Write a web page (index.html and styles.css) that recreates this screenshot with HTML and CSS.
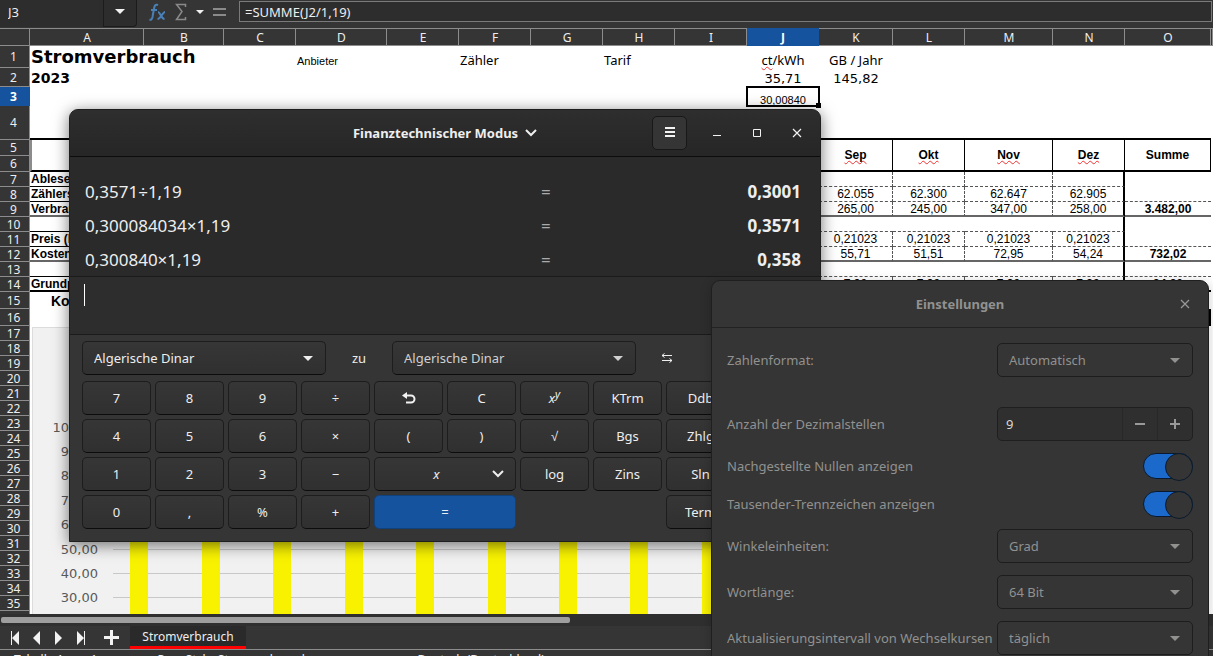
FILE: index.html
```html
<!DOCTYPE html>
<html lang="de">
<head>
  <meta charset="UTF-8" />
  <meta name="viewport" content="width=device-width, initial-scale=1.0"/>
  <title>Stromverbrauch</title>
  <link rel="stylesheet" href="styles.css">
</head>
<body>
  <div class="office">
    <!-- Formelleiste -->
    <div class="formula-bar">
      <input class="name-box" type="text" value="J3" aria-label="Namenfeld">
      <button class="name-drop" aria-label="Bereich"><span class="tri"></span></button>
      <div class="fx-tools">
        <button class="fx" aria-label="Funktionsassistent"><svg width="17" height="20" viewBox="0 0 17 20" fill="none" stroke="#4a80b8" stroke-width="2"><path d="M9 3C6.500 2 5.500 3.500 5 6.500L3.500 15C3 17.500 2 18 .5 17.500M2 8h6"/><path d="M9 10c2.500 0 3 7 6.500 7M16 10c-2.500 0-4 7-7.500 7"/></svg></button>
        <button class="sum" aria-label="Summe"><svg width="12" height="18" viewBox="0 0 12 18" fill="none" stroke="#8a8a8a" stroke-width="1.500"><path d="M10.500 4V1.500H1.500L7 8.500 1.500 16.500H10.500V14"/></svg></button>
        <button class="sum-drop" aria-label="Funktion wählen"><span class="tri small"></span></button>
        <button class="equal" aria-label="Formel"><svg width="13" height="10" viewBox="0 0 13 10" fill="#8a8a8a"><path d="M0 1h13v2H0zM0 7h13v2H0z"/></svg></button>
      </div>
      <input class="formula" type="text" value="=SUMME(J2/1,19)" aria-label="Eingabezeile">
    </div>

    <div class="sheet">
      <table class="grid">
        <colgroup>
          <col class="c-head"><col class="c-a"><col class="c-b"><col><col class="c-d"><col><col><col><col><col><col><col class="c-k"><col><col class="c-m"><col><col class="c-o"><col class="c-rest">
        </colgroup>
        <thead>
          <tr><th></th><th>A</th><th>B</th><th>C</th><th>D</th><th>E</th><th>F</th><th>G</th><th>H</th><th>I</th><th class="active">J</th><th>K</th><th>L</th><th>M</th><th>N</th><th>O</th><th></th></tr>
        </thead>
        <tbody>
          <tr class="r1"><th>1</th><td class="title" colspan="3">Stromverbrauch</td><td class="provider">Anbieter</td><td></td><td class="info">Zähler</td><td></td><td class="info">Tarif</td><td></td><td class="info mid"><span class="typo">ct</span>/kWh</td><td class="info mid">GB / Jahr</td><td colspan="5"></td></tr>
          <tr class="r2"><th>2</th><td class="year" colspan="9">2023</td><td class="rate">35,71</td><td class="rate">145,82</td><td colspan="5"></td></tr>
          <tr class="r3"><th class="active">3</th><td colspan="9"></td><td class="selected">30,00840<i class="handle"></i></td><td colspan="6"></td></tr>
          <tr class="r4"><th>4</th><td class="thick" colspan="15"></td><td></td></tr>
          <tr class="r5"><th>5</th><td class="edge thick" rowspan="2"></td><td class="thick" colspan="9" rowspan="2"></td><td class="month" rowspan="2"><span class="typo">Sep</span></td><td class="month" rowspan="2"><span class="typo">Okt</span></td><td class="month" rowspan="2"><span class="typo">Nov</span></td><td class="month" rowspan="2"><span class="typo">Dez</span></td><td class="month" rowspan="2">Summe</td><td rowspan="2"></td></tr>
          <tr class="r5"><th>6</th></tr>
          <tr><th>7</th><td class="label">Ablesedatum</td><td colspan="9"></td><td class="dash"></td><td class="dash"></td><td class="dash"></td><td class="dash last"></td><td></td><td></td></tr>
          <tr><th>8</th><td class="label">Zählerstand</td><td colspan="9"></td><td class="dash">62.055</td><td class="dash">62.300</td><td class="dash">62.647</td><td class="dash last">62.905</td><td class="under"></td><td></td></tr>
          <tr><th>9</th><td class="label double">Verbrauch</td><td colspan="9"></td><td class="dash double">265,00</td><td class="dash double">245,00</td><td class="dash double">347,00</td><td class="dash last double">258,00</td><td class="sum-cell double">3.482,00</td><td></td></tr>
          <tr><th>10</th><td class="label"></td><td colspan="9"></td><td class="under"></td><td class="under"></td><td class="under"></td><td class="under last"></td><td></td><td></td></tr>
          <tr><th>11</th><td class="label">Preis (kWh)</td><td colspan="9"></td><td class="dash">0,21023</td><td class="dash">0,21023</td><td class="dash">0,21023</td><td class="dash last">0,21023</td><td class="under"></td><td></td></tr>
          <tr><th>12</th><td class="label double">Kosten</td><td colspan="9"></td><td class="dash double">55,71</td><td class="dash double">51,51</td><td class="dash double">72,95</td><td class="dash last double">54,24</td><td class="sum-cell double">732,02</td><td></td></tr>
          <tr><th>13</th><td class="label"></td><td colspan="9"></td><td class="under"></td><td class="under"></td><td class="under"></td><td class="under last"></td><td class="under"></td><td></td></tr>
          <tr><th>14</th><td class="label thick">Grundpreis</td><td colspan="9"></td><td class="dash bold">7,90</td><td class="dash bold">7,90</td><td class="dash bold">7,90</td><td class="dash last bold">7,90</td><td class="sum-cell thick">94,80</td><td></td></tr>
          <tr class="r15"><th>15</th><td class="costs" colspan="16">Kosten</td></tr>
          <tr class="r15"><th>16</th><td colspan="14"></td><td class="boxed"></td><td></td></tr>
          <tr><th>17</th><td colspan="16"></td></tr>
          <tr><th>18</th><td colspan="16"></td></tr>
          <tr><th>19</th><td colspan="16"></td></tr>
          <tr><th>20</th><td colspan="16"></td></tr>
          <tr><th>21</th><td colspan="16"></td></tr>
          <tr><th>22</th><td colspan="16"></td></tr>
          <tr><th>23</th><td colspan="16"></td></tr>
          <tr><th>24</th><td colspan="16"></td></tr>
          <tr><th>25</th><td colspan="16"></td></tr>
          <tr><th>26</th><td colspan="16"></td></tr>
          <tr><th>27</th><td colspan="16"></td></tr>
          <tr><th>28</th><td colspan="16"></td></tr>
          <tr><th>29</th><td colspan="16"></td></tr>
          <tr><th>30</th><td colspan="16"></td></tr>
          <tr><th>31</th><td colspan="16"></td></tr>
          <tr><th>32</th><td colspan="16"></td></tr>
          <tr><th>33</th><td colspan="16"></td></tr>
          <tr><th>34</th><td colspan="16"></td></tr>
          <tr><th>35</th><td colspan="16"></td></tr>
          <tr><th></th><td colspan="16"></td></tr>
        </tbody>
      </table>

      <!-- Diagramm liegt über den Zellen -->
      <svg class="chart" width="900" height="300">
        <rect x="0" y="0" width="900" height="300" fill="#f1f1f1" stroke="#dcdcdc" stroke-width="2"/>
        <g fill="#c8c8c8">
          <rect x="81" y="222" width="800" height="1"/>
          <rect x="81" y="246" width="800" height="1"/>
          <rect x="81" y="270" width="800" height="1"/>
        </g>
        <g fill="#f8f200">
          <rect x="98" y="60" width="18" height="240"/>
          <rect x="170" y="60" width="18" height="240"/>
          <rect x="241" y="60" width="18" height="240"/>
          <rect x="313" y="60" width="18" height="240"/>
          <rect x="384" y="60" width="18" height="240"/>
          <rect x="456" y="60" width="18" height="240"/>
          <rect x="527" y="60" width="18" height="240"/>
          <rect x="598" y="60" width="18" height="240"/>
          <rect x="670" y="60" width="18" height="240"/>
        </g>
        <g class="axis" text-anchor="end">
          <text x="66" y="105">100,00</text>
          <text x="66" y="129">90,00</text>
          <text x="66" y="153">80,00</text>
          <text x="66" y="178">70,00</text>
          <text x="66" y="202">60,00</text>
          <text x="66" y="227">50,00</text>
          <text x="66" y="251">40,00</text>
          <text x="66" y="275">30,00</text>
        </g>
      </svg>
    </div>

    <div class="scroll"><div class="thumb"></div></div>
    <div class="tabs">
      <button aria-label="Erste Tabelle"><svg width="10" height="14" viewBox="0 0 10 14" fill="#f2f2f2"><path d="M1 0h1v14H1zM9 0v14L2 7z"/></svg></button>
      <button aria-label="Vorherige Tabelle"><svg width="10" height="14" viewBox="0 0 10 14" fill="#f2f2f2"><path d="M8 0v14L1 7z"/></svg></button>
      <button aria-label="Nächste Tabelle"><svg width="10" height="14" viewBox="0 0 10 14" fill="#f2f2f2"><path d="M1 0v14l7-7z"/></svg></button>
      <button aria-label="Letzte Tabelle"><svg width="10" height="14" viewBox="0 0 10 14" fill="#f2f2f2"><path d="M8 0h1v14H8zM1 0v14l7-7z"/></svg></button>
      <button class="add" aria-label="Tabelle hinzufügen"><svg width="15" height="15" viewBox="0 0 15 15" fill="#f2f2f2"><path d="M6 0h3v6h6v3H9v6H6V9H0V6h6z"/></svg></button>
      <button class="tab">Stromverbrauch</button>
    </div>
    <div class="status"><span>Tabelle 1 von 1</span><span class="style">PageStyle_Stromverbrauch</span><span>Deutsch (Deutschland)</span></div>
  </div>

  <!-- Taschenrechner -->
  <section class="window calc">
    <header class="calc-head">
      <button class="mode">Finanztechnischer Modus <svg width="12" height="8" viewBox="0 0 12 8" fill="none" stroke="#eee" stroke-width="2"><path d="M1 1l5 5 5-5"/></svg></button>
      <div class="buttons">
        <button class="menu" aria-label="Menü"><svg width="10" height="12" viewBox="0 0 10 12" fill="#f2f2f2"><path d="M0 0h10v2H0zM0 4h10v2H0zM0 8h10v2H0z"/></svg></button>
        <button class="wm" aria-label="Minimieren"><svg width="10" height="10" viewBox="0 0 10 10" fill="#f2f2f2"><path d="M1 7h8v1H1z"/></svg></button>
        <button class="wm" aria-label="Maximieren"><svg width="10" height="10" viewBox="0 0 10 10" fill="none" stroke="#f2f2f2"><path d="M1.500 1.500h7v7h-7z"/></svg></button>
        <button class="wm" aria-label="Schließen"><svg width="10" height="10" viewBox="0 0 10 10" fill="none" stroke="#f2f2f2" stroke-width="1.200"><path d="M1 1l8 8M9 1L1 9"/></svg></button>
      </div>
    </header>
    <div class="history">
      <div class="calc-row"><span>0,3571÷1,19</span><span class="eq">=</span><b>0,3001</b></div>
      <div class="calc-row"><span>0,300084034×1,19</span><span class="eq">=</span><b>0,3571</b></div>
      <div class="calc-row"><span>0,300840×1,19</span><span class="eq">=</span><b>0,358</b></div>
    </div>
    <div class="entry"><span class="caret"></span><input type="text" aria-label="Rechnung"></div>
    <div class="pad">
      <div class="convert">
        <span class="combo"><select aria-label="Von Währung"><option>Algerische Dinar</option></select></span>
        <span class="to">zu</span>
        <span class="combo dim"><select aria-label="In Währung"><option>Algerische Dinar</option></select></span>
        <button class="swap" aria-label="Tauschen"><svg width="12" height="10" viewBox="0 0 12 10" fill="none" stroke="#eee"><path d="M11 2.500H1M3.500 .5l-2.500 2 2.500 2M1 7.500h10M8.500 5.500l2.500 2-2.500 2"/></svg></button>
      </div>
      <div class="keys">
        <button>7</button><button>8</button><button>9</button><button>÷</button>
        <button aria-label="Rückgängig"><svg width="14" height="12" viewBox="0 0 14 12"><path d="M3 3.500h6a3.500 3.500 0 0 1 0 7H4" fill="none" stroke="#f2f2f2" stroke-width="2"/><path d="M0 3.500L5 0v7z" fill="#f2f2f2"/></svg></button>
        <button>C</button><button><i>x<sup>y</sup></i></button><button>KTrm</button><button>Ddb</button>
        <button class="first">4</button><button>5</button><button>6</button><button>×</button><button>(</button><button>)</button><button>√</button><button>Bgs</button><button>Zhlg</button>
        <button class="first">1</button><button>2</button><button>3</button><button>−</button>
        <button class="wide var"><i>x</i><svg width="12" height="8" viewBox="0 0 12 8" fill="none" stroke="#eee" stroke-width="2"><path d="M1 1l5 5 5-5"/></svg></button>
        <button>log</button><button>Zins</button><button>Sln</button>
        <button class="first">0</button><button>,</button><button>%</button><button>+</button><button class="wide result">=</button><button class="term">Term</button>
      </div>
    </div>
  </section>

  <!-- Einstellungen -->
  <section class="window prefs">
    <header class="prefs-head">
      <h2>Einstellungen</h2>
      <button class="wm" aria-label="Schließen"><svg width="10" height="10" viewBox="0 0 10 10" fill="none" stroke="#999" stroke-width="1.200"><path d="M1 1l8 8M9 1L1 9"/></svg></button>
    </header>
    <form class="prefs-body">
      <div class="pref spaced"><label for="format">Zahlenformat:</label><span class="combo"><select id="format"><option>Automatisch</option></select></span></div>
      <div class="pref"><label for="digits">Anzahl der Dezimalstellen</label>
        <span class="spin"><input id="digits" type="text" value="9"><button type="button" aria-label="Weniger"><svg width="10" height="10" viewBox="0 0 10 10" fill="#999"><path d="M0 4h10v2H0z"/></svg></button><button type="button" aria-label="Mehr"><svg width="10" height="10" viewBox="0 0 10 10" fill="#999"><path d="M4 0h2v4h4v2H6v4H4V6H0V4h4z"/></svg></button></span>
      </div>
      <div class="pref"><label for="zeros">Nachgestellte Nullen anzeigen</label><input class="switch" id="zeros" type="checkbox" checked></div>
      <div class="pref"><label for="thousands">Tausender-Trennzeichen anzeigen</label><input class="switch" id="thousands" type="checkbox" checked></div>
      <div class="pref"><label for="angle">Winkeleinheiten:</label><span class="combo"><select id="angle"><option>Grad</option></select></span></div>
      <div class="pref"><label for="word">Wortlänge:</label><span class="combo"><select id="word"><option>64 Bit</option></select></span></div>
      <div class="pref"><label for="refresh">Aktualisierungsintervall von Wechselkursen</label><span class="combo"><select id="refresh"><option>täglich</option></select></span></div>
    </form>
  </section>
</body>
</html>
```
FILE: styles.css
```css
* {
  box-sizing: border-box;
}

body {
  margin: 0;
  height: 100vh;
  overflow: hidden;
  position: relative;
  font-family: "Noto Sans", sans-serif;
  font-size: 13px;
  color: #eee;
  background: #353535;
}

button, input, select {
  font: inherit;
  color: inherit;
  margin: 0;
  padding: 0;
  border: none;
  background: none;
  outline: none;
}

button {
  display: flex;
  align-items: center;
  justify-content: center;
}

svg {
  display: block;
  flex: none;
}

.office {
  height: 100vh;
  display: flex;
  flex-direction: column;
}

/* Formelleiste */
.formula-bar {
  flex: none;
  display: flex;
  align-items: flex-start;
  height: 28px;
}

.name-box {
  width: 103px;
  height: 27px;
  padding: 0 0 4px 8px;
  background: #2d2d2d;
}

.name-drop {
  width: 34px;
  height: 27px;
  padding-bottom: 4px;
  background: #2d2d2d;
  border: 1px solid #1c1c1c;
  border-top: none;
  border-radius: 0 0 4px 0;
}

.tri {
  border: 5px solid transparent;
  border-top-color: #f2f2f2;
  border-bottom: none;
}

.tri.small {
  border-width: 4px 4px 0;
}

.fx-tools {
  display: flex;
  align-items: center;
  width: 102px;
  height: 23px;
  padding-left: 12px;
  gap: 9px;
}

.formula {
  flex: 1;
  height: 21px;
  margin: 1px 1px 0 0;
  padding-left: 5px;
  background: #2d2d2d;
  border: 1px solid #7a7a7a;
}

/* Tabelle */
.sheet {
  flex: 1;
  min-height: 0;
  overflow: hidden;
  position: relative;
  background: white;
  color: black;
}

.grid {
  width: 100%;
  table-layout: fixed;
  border-collapse: separate;
  border-spacing: 0;
  font-family: "Liberation Sans", Arial, sans-serif;
  font-size: 12px;
  line-height: 12px;
}

col { width: 72px; }
.c-head { width: 30px; }
.c-a { width: 114px; }
.c-b { width: 80px; }
.c-d { width: 91px; }
.c-k { width: 74px; }
.c-m { width: 88px; }
.c-o { width: 86px; }
.c-rest { width: auto; }

.grid td, .grid th {
  height: 15px;
  padding: 0;
  white-space: nowrap;
}

.grid th {
  font-family: "Noto Sans", sans-serif;
  font-weight: normal;
  color: #eee;
  background: #353535;
  border-right: 1px solid #8c8c8c;
  border-bottom: 1px solid #8c8c8c;
}

.grid tbody th {
  padding: 1px 2px 0 0;
}

.grid thead th {
  height: 18px;
  padding: 1px 0 0 1px;
  border-top: 1px solid #8c8c8c;
}

.grid th.active {
  font-weight: bold;
  color: white;
  background: #15539e;
  border-color: #15539e;
}

.r1 > * { height: 22px !important; }
.r2 > *, .r3 > * { height: 19px !important; }
.r4 > * { height: 34px !important; }
.r5 > * { height: 16px !important; }
.r15 > * { height: 17px !important; }

.title, .year {
  padding-left: 1px !important;
  font-family: "DejaVu Sans", sans-serif;
  font-weight: bold;
}

.title { font-size: 18px; }
.year { font-size: 14px; }

.provider {
  padding: 8px 0 0 1px !important;
  font-size: 11px;
}

.info {
  padding: 5px 0 0 1px !important;
  font-family: "Noto Sans", sans-serif;
  font-size: 13px;
}

.mid {
  padding-left: 0 !important;
  text-align: center;
}

.rate {
  padding-top: 2px !important;
  text-align: center;
  font-family: "DejaVu Sans", sans-serif;
  font-size: 13px;
}

.typo {
  text-decoration: underline wavy #e33 1px;
  text-decoration-skip-ink: none;
}

.selected {
  position: relative;
  padding-top: 6px !important;
  text-align: center;
  font-size: 11px;
  outline: 2px solid black;
  outline-offset: -1px;
}

.handle {
  position: absolute;
  right: -2px;
  bottom: -2px;
  width: 5px;
  height: 5px;
  background: black;
}

.thick { border-bottom: 2px solid black; }

.edge { border-left: 2px solid #8c8c8c; }

.month {
  text-align: center;
  font-weight: bold;
  border-right: 1px solid black;
  border-bottom: 2px solid black;
}

.label {
  padding-left: 1px !important;
  font-weight: bold;
  border-bottom: 1px solid black;
}

.dash {
  text-align: center;
  border-right: 1px dashed #555;
  border-bottom: 1px dashed #555;
}

.under { border-bottom: 1px dashed #555; }

.last { border-right: 2px solid black; }

.double { border-bottom: 2px solid #666; }

.label.thick { border-bottom: 2px solid black; }

.bold { font-weight: bold; }

.sum-cell {
  text-align: center;
  font-weight: bold;
}

.costs {
  padding-left: 21px !important;
  font-size: 14px;
  font-weight: bold;
}

.boxed { border: 2px solid black; }

.chart {
  position: absolute;
  left: 32px;
  top: 299px;
}

.axis {
  font-family: "DejaVu Sans", sans-serif;
  font-size: 13px;
  fill: #595959;
}

/* Fußbereich */
.scroll {
  flex: none;
  height: 12px;
  padding: 3px 1px;
  background: #2f2f2f;
}

.thumb {
  width: 47%;
  height: 6px;
  border-radius: 2px;
  background: #9e9e9e;
}

.tabs {
  flex: none;
  display: flex;
  align-items: center;
  height: 23px;
  padding-left: 10px;
  gap: 12px;
  font-size: 12px;
}

.tabs .add {
  margin-left: 6px;
}

.tabs .tab {
  width: 116px;
  height: 23px;
  margin-left: -1px;
  background: #2a2a2a;
  border-bottom: 3px solid #f00;
}

.status {
  flex: none;
  display: flex;
  gap: 60px;
  height: 7px;
  padding: 3px 0 0 14px;
  overflow: hidden;
  border-top: 1px solid #8c8c8c;
  font-size: 12px;
  line-height: 14px;
}

.status .style {
  width: 200px;
}

/* Fenster */
.window {
  position: absolute;
  background: #353535;
  border: 1px solid #1f1f1f;
}

.calc {
  left: 69px;
  top: 109px;
  width: 752px;
  border-radius: 9px 9px 0 0;
  box-shadow: 0 3px 16px rgba(0,0,0,0.55);
}

.calc-head {
  position: relative;
  display: flex;
  align-items: center;
  justify-content: center;
  height: 47px;
  border-bottom: 1px solid #0c0c0c;
  border-radius: 8px 8px 0 0;
  background: linear-gradient(#2e2e2e, #262626);
}

.mode {
  gap: 7px;
  font-weight: bold;
}

.buttons {
  position: absolute;
  right: 11px;
  display: flex;
  align-items: center;
  gap: 16px;
}

.menu {
  width: 35px;
  height: 34px;
  margin-right: 2px;
  background: #353535;
  border: 1px solid #181818;
  border-radius: 5px;
}

.wm {
  width: 24px;
  height: 24px;
}

.history {
  padding-top: 17px;
  background: #2a2a2a;
  border-bottom: 1px solid #1b1b1b;
}

.calc-row {
  display: grid;
  grid-template-columns: 456px auto 1fr;
  align-items: center;
  height: 34px;
  padding: 0 19px 0 15px;
  font-size: 17px;
}

.calc-row b {
  text-align: right;
}

.calc-row .eq {
  color: #aaa;
}

.entry {
  display: flex;
  height: 58px;
  padding: 7px 14px;
  background: #2d2d2d;
  border-bottom: 1px solid #1b1b1b;
}

.entry input {
  flex: 1;
  height: 22px;
}

.caret {
  width: 1px;
  height: 22px;
  background: white;
}

.pad {
  padding: 6px 12px 12px;
}

.convert {
  display: flex;
  align-items: center;
  margin-bottom: 6px;
}

.convert .combo {
  width: 244px;
}

.to {
  width: 66px;
  text-align: center;
}

.swap {
  width: 62px;
  height: 34px;
}

.combo {
  position: relative;
  display: block;
  height: 34px;
}

.combo::after {
  content: "";
  position: absolute;
  right: 13px;
  top: 15px;
  border: 5px solid transparent;
  border-top-color: currentColor;
  border-bottom: none;
  pointer-events: none;
}

.combo select {
  appearance: none;
  width: 100%;
  height: 34px;
  padding-left: 11px;
  border: 1px solid #1d1d1d;
  border-radius: 5px;
}

.calc .combo select, .keys button {
  background: linear-gradient(#363636, #303030);
  border-bottom-color: #0c0c0c;
}

.combo.dim {
  color: #d0d0d0;
}

.keys {
  display: grid;
  grid-template-columns: repeat(10, 1fr);
  grid-auto-rows: 34px;
  gap: 4px;
}

.keys button {
  border: 1px solid #1d1d1d;
  border-bottom-color: #0c0c0c;
  border-radius: 5px;
}

.keys .first {
  grid-column: 1;
}

.keys sup {
  font-size: 11px;
  line-height: 1px;
}

.keys .wide {
  grid-column: span 2;
}

.keys .var {
  display: grid;
  grid-template-columns: 1fr 12px;
  padding: 0 11px 0 6px;
}

.keys .result {
  background: #15539e;
  border-color: #10427e;
}

.keys .term {
  grid-column: 9;
}

.prefs {
  left: 711px;
  top: 280px;
  width: 498px;
  color: #919190;
  border-radius: 9px 9px 0 0;
  box-shadow: 0 2px 12px rgba(0,0,0,0.2);
}

.prefs-head {
  display: grid;
  grid-template-columns: 24px 1fr 24px;
  align-items: center;
  height: 47px;
  padding: 0 11px;
  border-bottom: 1px solid #222;
}

.prefs-head h2 {
  grid-column: 2;
  margin: 0;
  font-size: 13px;
  text-align: center;
}

.prefs-body {
  display: grid;
  gap: 12px;
  padding: 15px;
}

.pref {
  display: flex;
  align-items: center;
  justify-content: space-between;
  white-space: nowrap;
}

.pref.spaced {
  margin-bottom: 18px;
}

.prefs .combo, .spin {
  width: 196px;
}

.spin {
  display: flex;
  height: 34px;
  background: #2f2f2f;
  border: 1px solid #1f1f1f;
  border-radius: 5px;
}

.spin input {
  flex: 1;
  min-width: 0;
  padding-left: 8px;
  color: #d8d8d8;
}

.spin button {
  width: 35px;
  border-left: 1px solid #282828;
}

.switch {
  appearance: none;
  width: 50px;
  height: 26px;
  border: 1px solid #0a1a2e;
  border-radius: 13px;
  background: #1b6acb;
}

.switch::before {
  content: "";
  display: block;
  width: 26px;
  height: 26px;
  margin: -1px -1px 0 auto;
  border: 1px solid #0a1a2e;
  border-radius: 50%;
  background: #353535;
}
```
